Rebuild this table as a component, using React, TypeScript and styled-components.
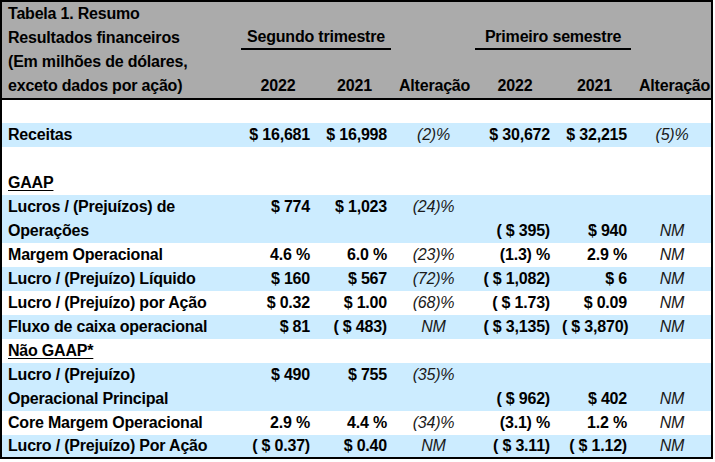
import React from "react";
import styled, { createGlobalStyle } from "styled-components";

const GlobalStyle = createGlobalStyle`
    html, body {
        margin: 0;
        padding: 0;
        background: #ffffff;
    }
`;

const Frame = styled.div`
    width: 713px;
    box-sizing: border-box;
    border: 2px solid #000;
`;

const Table = styled.table`
    width: 100%;
    table-layout: fixed;
    border-collapse: separate;
    border-spacing: 0;
    font-family: "Liberation Sans", Arial, sans-serif;
    font-size: 16px;
    letter-spacing: -0.2px;
    color: #000;
`;

const HeadRow = styled.tr<{ $last?: boolean }>`
    background: #ababab;
    & > th {
        border-bottom: ${({ $last }) => ($last ? "2px solid #000" : "none")};
    }
`;

const BodyRow = styled.tr<{ $blue?: boolean; $height: number }>`
    background: ${({ $blue }) => ($blue ? "#ccecff" : "#ffffff")};
    & > td {
        height: ${({ $height }) => $height}px;
        line-height: ${({ $height }) => $height}px;
    }
`;

const HeadCell = styled.th<{ $align?: "left" | "center" | "right" }>`
    height: 24px;
    padding: 0 6px;
    line-height: 24px;
    font-weight: bold;
    white-space: nowrap;
    text-align: ${({ $align }) => $align ?? "left"};
    vertical-align: middle;
    overflow: visible;
`;

const GroupCell = styled.th`
    height: 24px;
    padding: 0 2px 0 1px;
    vertical-align: bottom;
`;

const GroupTitle = styled.div`
    line-height: 22px;
    font-weight: bold;
    text-align: center;
    border-bottom: 2px solid #000;
    white-space: nowrap;
`;

const LabelCell = styled.td<{ $underline?: boolean }>`
    padding: 0 6px;
    font-weight: bold;
    white-space: nowrap;
    text-decoration: ${({ $underline }) => ($underline ? "underline" : "none")};
    text-underline-offset: 2px;
    vertical-align: middle;
`;

const ValueCell = styled.td<{ $change?: boolean }>`
    padding: 0 6px;
    white-space: nowrap;
    vertical-align: middle;
    text-align: ${({ $change }) => ($change ? "center" : "right")};
    font-weight: ${({ $change }) => ($change ? "normal" : "bold")};
    font-style: ${({ $change }) => ($change ? "italic" : "normal")};
    color: ${({ $change }) => ($change ? "#1a1a1a" : "#000")};
`;

interface ILine {
    label: string;
    values: string[];
    blue?: boolean;
    heading?: boolean;
    height?: number;
}

const e = ["", "", "", "", "", ""];

const lines: ILine[] = [
    { label: "", values: e, height: 23 },
    { label: "Receitas", values: ["$ 16,681", "$ 16,998", "(2)%", "$ 30,672", "$ 32,215", "(5)%"], blue: true },
    { label: "", values: e },
    { label: "GAAP", values: e, heading: true },
    { label: "Lucros / (Prejuízos) de", values: ["$ 774", "$ 1,023", "(24)%", "", "", ""], blue: true },
    { label: "Operações", values: ["", "", "", "( $ 395)", "$ 940", "NM"], blue: true },
    { label: "Margem Operacional", values: ["4.6 %", "6.0 %", "(23)%", "(1.3) %", "2.9 %", "NM"] },
    { label: "Lucro / (Prejuízo) Líquido", values: ["$ 160", "$ 567", "(72)%", "( $ 1,082)", "$ 6", "NM"], blue: true },
    { label: "Lucro / (Prejuízo) por Ação", values: ["$ 0.32", "$ 1.00", "(68)%", "( $ 1.73)", "$ 0.09", "NM"] },
    { label: "Fluxo de caixa operacional", values: ["$ 81", "( $ 483)", "NM", "( $ 3,135)", "( $ 3,870)", "NM"], blue: true },
    { label: "Não GAAP*", values: e, heading: true },
    { label: "Lucro / (Prejuízo)", values: ["$ 490", "$ 755", "(35)%", "", "", ""], blue: true },
    { label: "Operacional Principal", values: ["", "", "", "( $ 962)", "$ 402", "NM"], blue: true },
    { label: "Core Margem Operacional", values: ["2.9 %", "4.4 %", "(34)%", "(3.1) %", "1.2 %", "NM"] },
    { label: "Lucro / (Prejuízo) Por Ação", values: ["( $ 0.37)", "$ 0.40", "NM", "( $ 3.11)", "( $ 1.12)", "NM"], blue: true, height: 22 },
];

const widths = [238, 76, 77, 81, 82, 77, 78];

export default function App() {
    return (
        <>
            <GlobalStyle />
            <Frame>
                <Table>
                    <colgroup>
                        {widths.map((w, i) => (
                            <col key={i} style={{ width: w }} />
                        ))}
                    </colgroup>
                    <thead>
                        <HeadRow>
                            <HeadCell>Tabela 1. Resumo</HeadCell>
                            <HeadCell colSpan={6} />
                        </HeadRow>
                        <HeadRow>
                            <HeadCell>Resultados financeiros</HeadCell>
                            <GroupCell colSpan={2}>
                                <GroupTitle>Segundo trimestre</GroupTitle>
                            </GroupCell>
                            <HeadCell />
                            <GroupCell colSpan={2}>
                                <GroupTitle>Primeiro semestre</GroupTitle>
                            </GroupCell>
                            <HeadCell />
                        </HeadRow>
                        <HeadRow>
                            <HeadCell>(Em milhões de dólares,</HeadCell>
                            <HeadCell colSpan={6} />
                        </HeadRow>
                        <HeadRow $last>
                            <HeadCell>exceto dados por ação)</HeadCell>
                            <HeadCell $align="center">2022</HeadCell>
                            <HeadCell $align="center">2021</HeadCell>
                            <HeadCell $align="center">Alteração</HeadCell>
                            <HeadCell $align="center">2022</HeadCell>
                            <HeadCell $align="center">2021</HeadCell>
                            <HeadCell $align="center">Alteração</HeadCell>
                        </HeadRow>
                    </thead>
                    <tbody>
                        {lines.map((line, i) => (
                            <BodyRow key={i} $blue={line.blue} $height={line.height ?? 24}>
                                <LabelCell $underline={line.heading}>{line.label}</LabelCell>
                                {line.values.map((v, j) => (
                                    <ValueCell key={j} $change={j === 2 || j === 5}>
                                        {v}
                                    </ValueCell>
                                ))}
                            </BodyRow>
                        ))}
                    </tbody>
                </Table>
            </Frame>
        </>
    );
}
